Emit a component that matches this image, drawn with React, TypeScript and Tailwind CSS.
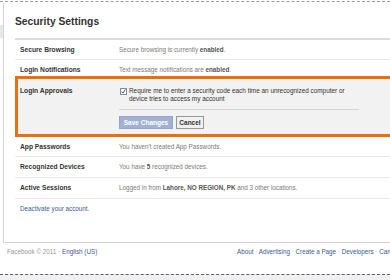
const Row = ({ label, children }: { label: string; children: React.ReactNode }) => {
  return (
    <div className="flex items-center h-[21px] border-b border-[#e6e6e6] pl-[5px]">
      <div className="w-[99px] shrink-0 font-bold text-[6.7px] text-[#333]">{label}</div>
      <div className="whitespace-nowrap text-[6.3px] text-[#7a7a7a]">{children}</div>
    </div>
  );
};

const App = () => {
  return (
    <div className="w-[390px] h-[280px] overflow-hidden bg-white font-['Liberation_Sans',Arial,sans-serif] leading-[8px]">
      <div className="pt-px">
        <div className="border-t border-dashed border-[#9a9a9a]" />
      </div>
      <div className="flex h-[241px]">
        <div className="w-[3px] shrink-0">
          <div className="mt-[23px] h-[13px] bg-[#e4e7ee]" />
        </div>
        <div className="flex-1 min-w-0 border-l border-b border-[#d4d4d4] pl-[11px] mt-px">
          <h2 className="pt-[13px] text-[10.3px] leading-[12px] font-bold text-[#333]">Security Settings</h2>
          <div className="mt-[10px] border-t-2 border-[#dcdcdc]">
            <div className="flex items-center h-[20px] border-b border-[#e6e6e6] pl-[5px]">
              <div className="w-[99px] shrink-0 font-bold text-[6.7px] text-[#333]">Secure Browsing</div>
              <div className="whitespace-nowrap text-[6.3px] text-[#7a7a7a]">
                Secure browsing is currently <b className="text-[#555]">enabled</b>.
              </div>
            </div>
            <div className="flex items-center h-[20px] border-b border-[#e6e6e6] pl-[5px]">
              <div className="w-[99px] shrink-0 font-bold text-[6.7px] text-[#333]">Login Notifications</div>
              <div className="whitespace-nowrap text-[6.3px] text-[#7a7a7a]">
                Text message notifications are <b className="text-[#555]">enabled</b>.
              </div>
            </div>
            <div className="-mt-[4px] -mr-[12px] border-t-[3px] border-b-[3px] border-l-[3px] border-[#e8700d] bg-[#f2f2f2] pl-[2px] pt-[8px] pb-[5px] flex">
              <div className="w-[99px] shrink-0 font-bold text-[6.7px] text-[#333]">Login Approvals</div>
              <div className="w-[240px]">
                <div className="flex items-start">
                  <svg width="7" height="7" viewBox="0 0 7 7" className="mt-[1px] ml-px shrink-0">
                    <rect x="0.5" y="0.5" width="6" height="6" fill="#fff" stroke="#8c8c8c" />
                    <path d="M1.6 3.6 L2.9 5.1 L5.5 1.5" fill="none" stroke="#2d4f9e" strokeWidth="1" />
                  </svg>
                  <div className="ml-[2px] text-[6.4px] text-[#333] whitespace-nowrap">
                    <div>Require me to enter a security code each time an unrecognized computer or</div>
                    <div>device tries to access my account</div>
                  </div>
                </div>
                <div className="mt-[6px] border-t border-[#d6d6d6]" />
                <div className="mt-[6px] flex gap-[3px]">
                  <button className="w-[54px] h-[13px] bg-[#a2b1d3] border border-[#95a6cb] text-white font-bold text-[6.5px]">
                    Save Changes
                  </button>
                  <button className="w-[28px] h-[13px] bg-[#f0f0f0] border border-[#999] text-[#333] font-bold text-[6.5px]">
                    Cancel
                  </button>
                </div>
              </div>
            </div>
            <div className="flex items-center h-[20px] border-b border-[#e6e6e6] pl-[5px]">
              <div className="w-[99px] shrink-0 font-bold text-[6.7px] text-[#333]">App Passwords</div>
              <div className="whitespace-nowrap text-[6.3px] text-[#7a7a7a]">You haven't created App Passwords.</div>
            </div>
            <Row label="Recognized Devices">
              You have <b className="text-[#555]">5</b> recognized devices.
            </Row>
            <Row label="Active Sessions">
              Logged in from <b className="text-[#555]">Lahore, NO REGION, PK</b> and 3 other locations.
            </Row>
          </div>
          <div className="mt-[6px] pl-[5px] text-[6.3px] text-[#3b5998]">Deactivate your account.</div>
        </div>
      </div>
      <div className="h-[31px] flex pt-[5px] pl-[7px] text-[6.3px] whitespace-nowrap">
        <div className="w-[230px] shrink-0 text-[#999]">
          Facebook © 2011 · <span className="text-[#3b5998]">English (US)</span>
        </div>
        <div className="text-[#3b5998]">
          About <span className="text-[#999]">·</span> Advertising <span className="text-[#999]">·</span> Create a Page{" "}
          <span className="text-[#999]">·</span> Developers <span className="text-[#999]">·</span> Careers
        </div>
      </div>
      <div className="border-t border-dashed border-[#5a6070] h-[6px] bg-[#f0f0f0]" />
    </div>
  );
};

export default App;
